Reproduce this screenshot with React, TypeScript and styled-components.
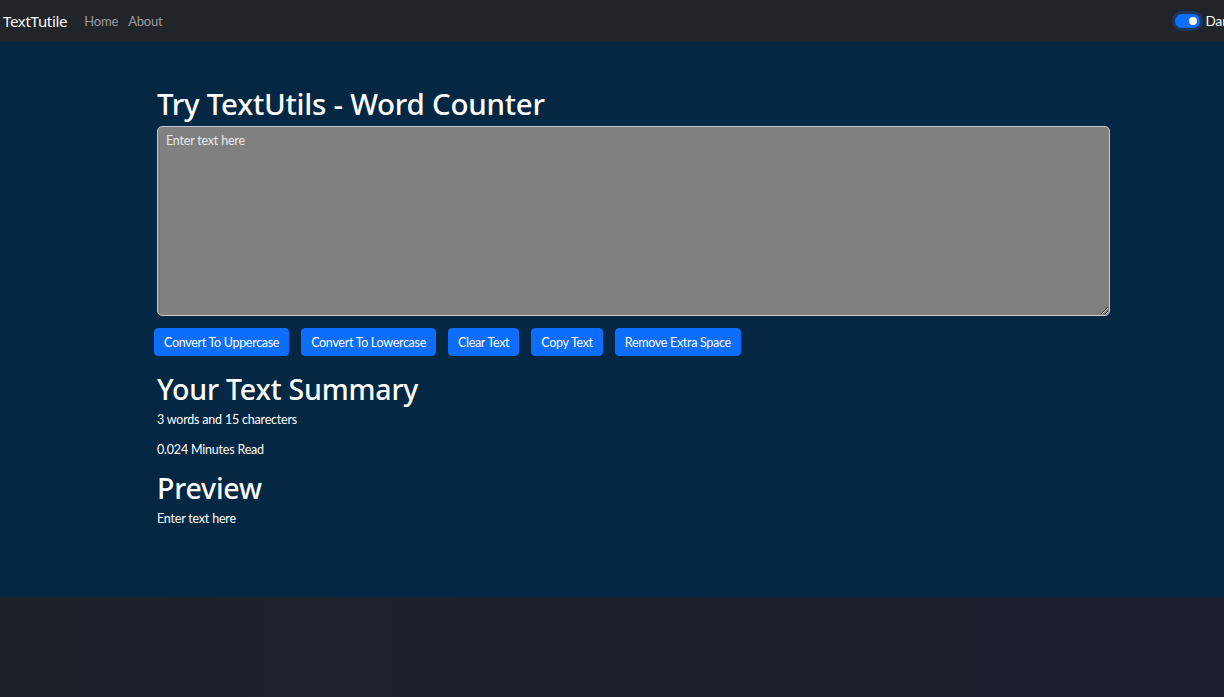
import React from "react";
import styled, { createGlobalStyle } from "styled-components";

const Global = createGlobalStyle`
  html, body { margin: 0; padding: 0; background: #1c212b; }
  body { font-family: Lato, "Noto Sans", sans-serif; color: #fff; }
  * { box-sizing: border-box; }
`;

const Page = styled.div`
  width: 1224px;
  height: 697px;
  overflow: hidden;
  display: flex;
  flex-direction: column;
  background: linear-gradient(90deg, #1d2229 0%, #1c1f2e 100%);
`;

const Nav = styled.nav`
  height: 42px;
  flex: none;
  background: #212529;
  display: flex;
  align-items: center;
  padding: 0 0 0 3px;
`;

const Brand = styled.a`
  font-family: "Noto Sans", sans-serif;
  font-size: 15px;
  color: #fff;
  margin-right: 17px;
  letter-spacing: -0.3px;
`;

const NavLink = styled.a`
  font-size: 13px;
  letter-spacing: -0.2px;
  color: rgba(255, 255, 255, 0.55);
  margin-right: 10px;
`;

const Spacer = styled.div`
  flex: 1;
`;

const Toggle = styled.div`
  display: flex;
  align-items: center;
  gap: 5px;
  margin-right: -10px;
  font-size: 13.5px;
  color: #fff;
`;

const Switch = styled.span`
  position: relative;
  width: 25px;
  height: 14px;
  border-radius: 7px;
  background: #0d6efd;
  box-shadow: 0 0 0 3px rgba(13, 110, 253, 0.25);
  &::after {
    content: "";
    position: absolute;
    right: 3px;
    top: 3px;
    width: 8px;
    height: 8px;
    border-radius: 50%;
    background: #fff;
  }
`;

const Main = styled.main`
  background: #042743;
  height: 555px;
  flex: none;
  padding: 43px 0 0 157px;
`;

const Container = styled.div`
  width: 953px;
`;

const Title = styled.h1`
  margin: 0 0 3px;
  font-family: "Noto Sans", sans-serif;
  font-size: 29.5px;
  font-weight: 500;
  line-height: 38px;
  letter-spacing: -0.25px;
`;

const TextArea = styled.textarea`
  display: block;
  width: 953px;
  height: 190px;
  background: #808080;
  border: 1px solid #c6c9cd;
  border-radius: 5px;
  padding: 5px 8px;
  color: #fff;
  font-family: inherit;
  font-size: 12.5px;
  letter-spacing: -0.2px;
  line-height: 1.5;
  resize: vertical;
  outline: none;
  &::placeholder {
    color: #e8e8e8;
  }
`;

const ButtonRow = styled.div`
  display: flex;
  gap: 12px;
  margin: 12px 0 0 -3px;
`;

const Button = styled.button`
  height: 28px;
  padding: 0 9px;
  background: #0d6efd;
  color: #fff;
  border: 1px solid #0d6efd;
  border-radius: 4px;
  font-family: inherit;
  font-size: 12.5px;
  letter-spacing: -0.3px;
  cursor: pointer;
`;

const Summary = styled.section`
  margin-top: 15px;
`;

const Heading = styled.h2`
  margin: 0 0 3px;
  font-family: "Noto Sans", sans-serif;
  font-size: 28.5px;
  font-weight: 500;
  line-height: 36px;
  letter-spacing: -0.2px;
`;

const Para = styled.p`
  margin: 0 0 11px;
  font-size: 12.5px;
  letter-spacing: -0.2px;
  line-height: 19px;
`;

export default function App() {
  const buttons = [
    "Convert To Uppercase",
    "Convert To Lowercase",
    "Clear Text",
    "Copy Text",
    "Remove Extra Space",
  ];
  return (
    <Page>
      <Global />
      <Nav>
        <Brand>TextTutile</Brand>
        <NavLink>Home</NavLink>
        <NavLink>About</NavLink>
        <Spacer />
        <Toggle>
          <Switch />
          <span>Dark</span>
        </Toggle>
      </Nav>
      <Main>
        <Container>
          <Title>Try TextUtils - Word Counter</Title>
          <TextArea placeholder="Enter text here" />
          <ButtonRow>
            {buttons.map((b) => (
              <Button key={b}>{b}</Button>
            ))}
          </ButtonRow>
          <Summary>
            <Heading>Your Text Summary</Heading>
            <Para>3 words and 15 charecters</Para>
            <Para>0.024 Minutes Read</Para>
            <Heading>Preview</Heading>
            <Para>Enter text here</Para>
          </Summary>
        </Container>
      </Main>
    </Page>
  );
}
